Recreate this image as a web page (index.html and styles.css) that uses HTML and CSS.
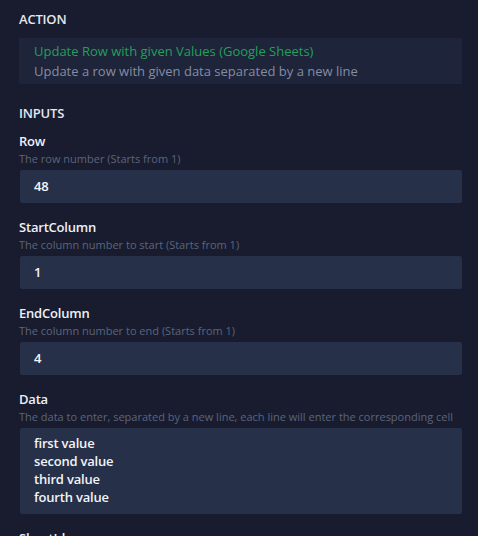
FILE: index.html
```html
<!DOCTYPE html>
<html>
<head>
<meta charset="utf-8">
<link rel="stylesheet" href="styles.css">
</head>
<body>
<div class="panel">
  <h2 class="section-title">ACTION</h2>
  <div class="action-box">
    <div class="action-name">Update Row with given Values (Google Sheets)</div>
    <div class="action-desc">Update a row with given data separated by a new line</div>
  </div>
  <h2 class="section-title inputs-title">INPUTS</h2>
  <div class="field">
    <div class="label">Row</div>
    <div class="desc">The row number (Starts from 1)</div>
    <div class="input">48</div>
  </div>
  <div class="field">
    <div class="label">StartColumn</div>
    <div class="desc">The column number to start (Starts from 1)</div>
    <div class="input">1</div>
  </div>
  <div class="field">
    <div class="label">EndColumn</div>
    <div class="desc">The column number to end (Starts from 1)</div>
    <div class="input">4</div>
  </div>
  <div class="field">
    <div class="label">Data</div>
    <div class="desc">The data to enter, separated by a new line, each line will enter the corresponding cell</div>
    <div class="input textarea">first value<br>second value<br>third value<br>fourth value</div>
  </div>
  <div class="field">
    <div class="label">SheetId</div>
  </div>
</div>
</body>
</html>
```
FILE: styles.css
```css
html, body {
  margin: 0;
  padding: 0;
  background: #181c2e;
  height: 100%;
  overflow: hidden;
}
body {
  font-family: "Open Sans", "Noto Sans", sans-serif;
  color: #e4e7ef;
}
.panel {
  padding: 10px 16px 0 19px;
  width: 443px;
}
.section-title {
  margin: 0;
  font-size: 13px;
  font-weight: 600;
  line-height: 18px;
  color: #e4e7ef;
  letter-spacing: -0.2px;
}
.action-box {
  margin-top: 10px;
  background: #1e2439;
  padding: 3px 15px 3px 15px;
  height: 40px;
}
.action-name {
  font-size: 13px;
  line-height: 20px;
  color: #22a05a;
}
.action-desc {
  font-size: 13px;
  line-height: 20px;
  color: #858ca3;
}
.inputs-title {
  margin-top: 20px;
}
.field {
  margin-top: 10px;
  margin-bottom: 15px;
}
.label {
  font-size: 13px;
  font-weight: 600;
  line-height: 18px;
  color: #eef0f5;
  letter-spacing: -0.2px;
}
.desc {
  font-size: 11px;
  line-height: 16px;
  color: #5c647d;
  margin-top: 1px;
}
.input {
  margin-top: 3px;
  margin-left: 1px;
  background: #263049;
  border-radius: 2px;
  height: 33px;
  box-sizing: border-box;
  padding: 7px 14px;
  font-size: 13px;
  font-weight: 600;
  line-height: 19px;
  color: #f2f4f8;
  letter-spacing: -0.2px;
}
.textarea {
  height: 86px;
  padding-top: 6px;
  line-height: 18px;
}
```
